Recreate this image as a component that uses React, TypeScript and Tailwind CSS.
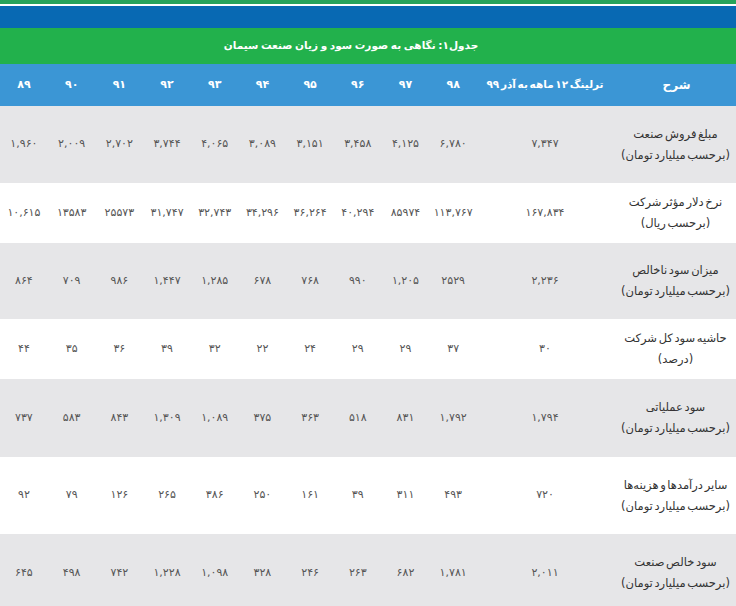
const years = ["۹۸", "۹۷", "۹۶", "۹۵", "۹۴", "۹۳", "۹۲", "۹۱", "۹۰", "۸۹"];

type Row = {
  title: string;
  unit: string;
  trailing: string;
  values: string[]; // from 98 down to 89
  height: string;
  shaded: boolean;
};

const rows: Row[] = [
  {
    title: "مبلغ فروش صنعت",
    unit: "(برحسب میلیارد تومان)",
    trailing: "۷,۳۴۷",
    values: ["۶,۷۸۰", "۴,۱۲۵", "۳,۴۵۸", "۳,۱۵۱", "۳,۰۸۹", "۴,۰۶۵", "۳,۷۴۴", "۲,۷۰۲", "۲,۰۰۹", "۱,۹۶۰"],
    height: "h-[77px]",
    shaded: true,
  },
  {
    title: "نرخ دلار مؤثر شرکت",
    unit: "(برحسب ریال)",
    trailing: "۱۶۷,۸۳۴",
    values: ["۱۱۳,۷۶۷", "۸۵۹۷۴", "۴۰,۲۹۴", "۳۶,۲۶۴", "۳۴,۲۹۶", "۳۲,۷۴۳", "۳۱,۷۴۷", "۲۵۵۷۳", "۱۳۵۸۳", "۱۰,۶۱۵"],
    height: "h-[60px]",
    shaded: false,
  },
  {
    title: "میزان سود ناخالص",
    unit: "(برحسب میلیارد تومان)",
    trailing: "۲,۲۳۶",
    values: ["۲۵۲۹", "۱,۲۰۵", "۹۹۰", "۷۶۸", "۶۷۸", "۱,۲۸۵", "۱,۴۴۷", "۹۸۶", "۷۰۹", "۸۶۴"],
    height: "h-[76px]",
    shaded: true,
  },
  {
    title: "حاشیه سود کل شرکت",
    unit: "(درصد)",
    trailing: "۳۰",
    values: ["۳۷", "۲۹", "۲۹", "۲۴", "۲۲", "۳۲", "۳۹", "۳۶", "۳۵", "۴۴"],
    height: "h-[60px]",
    shaded: false,
  },
  {
    title: "سود عملیاتی",
    unit: "(برحسب میلیارد تومان)",
    trailing: "۱,۷۹۴",
    values: ["۱,۷۹۲", "۸۳۱", "۵۱۸", "۳۶۳", "۳۷۵", "۱,۰۸۹", "۱,۳۰۹", "۸۴۳", "۵۸۳", "۷۳۷"],
    height: "h-[78px]",
    shaded: true,
  },
  {
    title: "سایر درآمدها و هزینه‌ها",
    unit: "(برحسب میلیارد تومان)",
    trailing: "۷۲۰",
    values: ["۴۹۳", "۳۱۱", "۳۹", "۱۶۱", "۲۵۰", "۳۸۶", "۲۶۵", "۱۲۶", "۷۹", "۹۲"],
    height: "h-[77px]",
    shaded: false,
  },
  {
    title: "سود خالص صنعت",
    unit: "(برحسب میلیارد تومان)",
    trailing: "۲,۰۱۱",
    values: ["۱,۷۸۱", "۶۸۲", "۲۶۳", "۲۴۶", "۳۲۸", "۱,۰۹۸", "۱,۲۲۸", "۷۴۲", "۴۹۸", "۶۴۵"],
    height: "h-[78px]",
    shaded: true,
  },
];

export default function App() {
  return (
    <main
      dir="rtl"
      className="w-[736px] h-[606px] overflow-hidden bg-white font-['DejaVu_Sans',sans-serif]"
    >
      <div className="h-[4px] bg-[#27a35a]" />
      <div className="h-[2px] bg-white" />
      <div className="h-[22px] bg-[#0869b3]" />
      <div className="flex h-[36px] items-center justify-center bg-[#22b14c] pr-[34px]">
        <h1 className="text-[10.5px] font-bold tracking-tight text-white [word-spacing:-1px]">
          جدول۱: نگاهی به صورت سود و زیان صنعت سیمان
        </h1>
      </div>

      <table className="w-full table-fixed border-collapse">
        <colgroup>
          <col className="w-[123px]" />
          <col className="w-[136px]" />
          {years.map((y) => (
            <col key={y} />
          ))}
        </colgroup>
        <thead>
          <tr className="h-[42px] bg-[#3b96d5] text-[11px] font-bold text-white">
            <th className="pl-[4px] text-[12px] font-bold">شرح</th>
            <th className="text-[10.5px] font-bold tracking-tight [word-spacing:-2px]">
              ترلینگ ۱۲ ماهه به آذر ۹۹
            </th>
            {years.map((y) => (
              <th key={y} className="font-bold">
                {y}
              </th>
            ))}
          </tr>
        </thead>
        <tbody>
          {rows.map((r) => (
            <tr
              key={r.title}
              className={`${r.height} ${r.shaded ? "bg-[#e6e6e8]" : "bg-white"}`}
            >
              <td className="pl-[2px] text-center text-[11.5px] leading-[21px] tracking-tight text-[#333] [word-spacing:-2px]">
                <div>{r.title}</div>
                <div>{r.unit}</div>
              </td>
              <td className="text-center text-[11px] text-[#555]">{r.trailing}</td>
              {r.values.map((v, i) => (
                <td key={i} className="text-center text-[11px] text-[#555]">
                  {v}
                </td>
              ))}
            </tr>
          ))}
        </tbody>
      </table>
    </main>
  );
}
